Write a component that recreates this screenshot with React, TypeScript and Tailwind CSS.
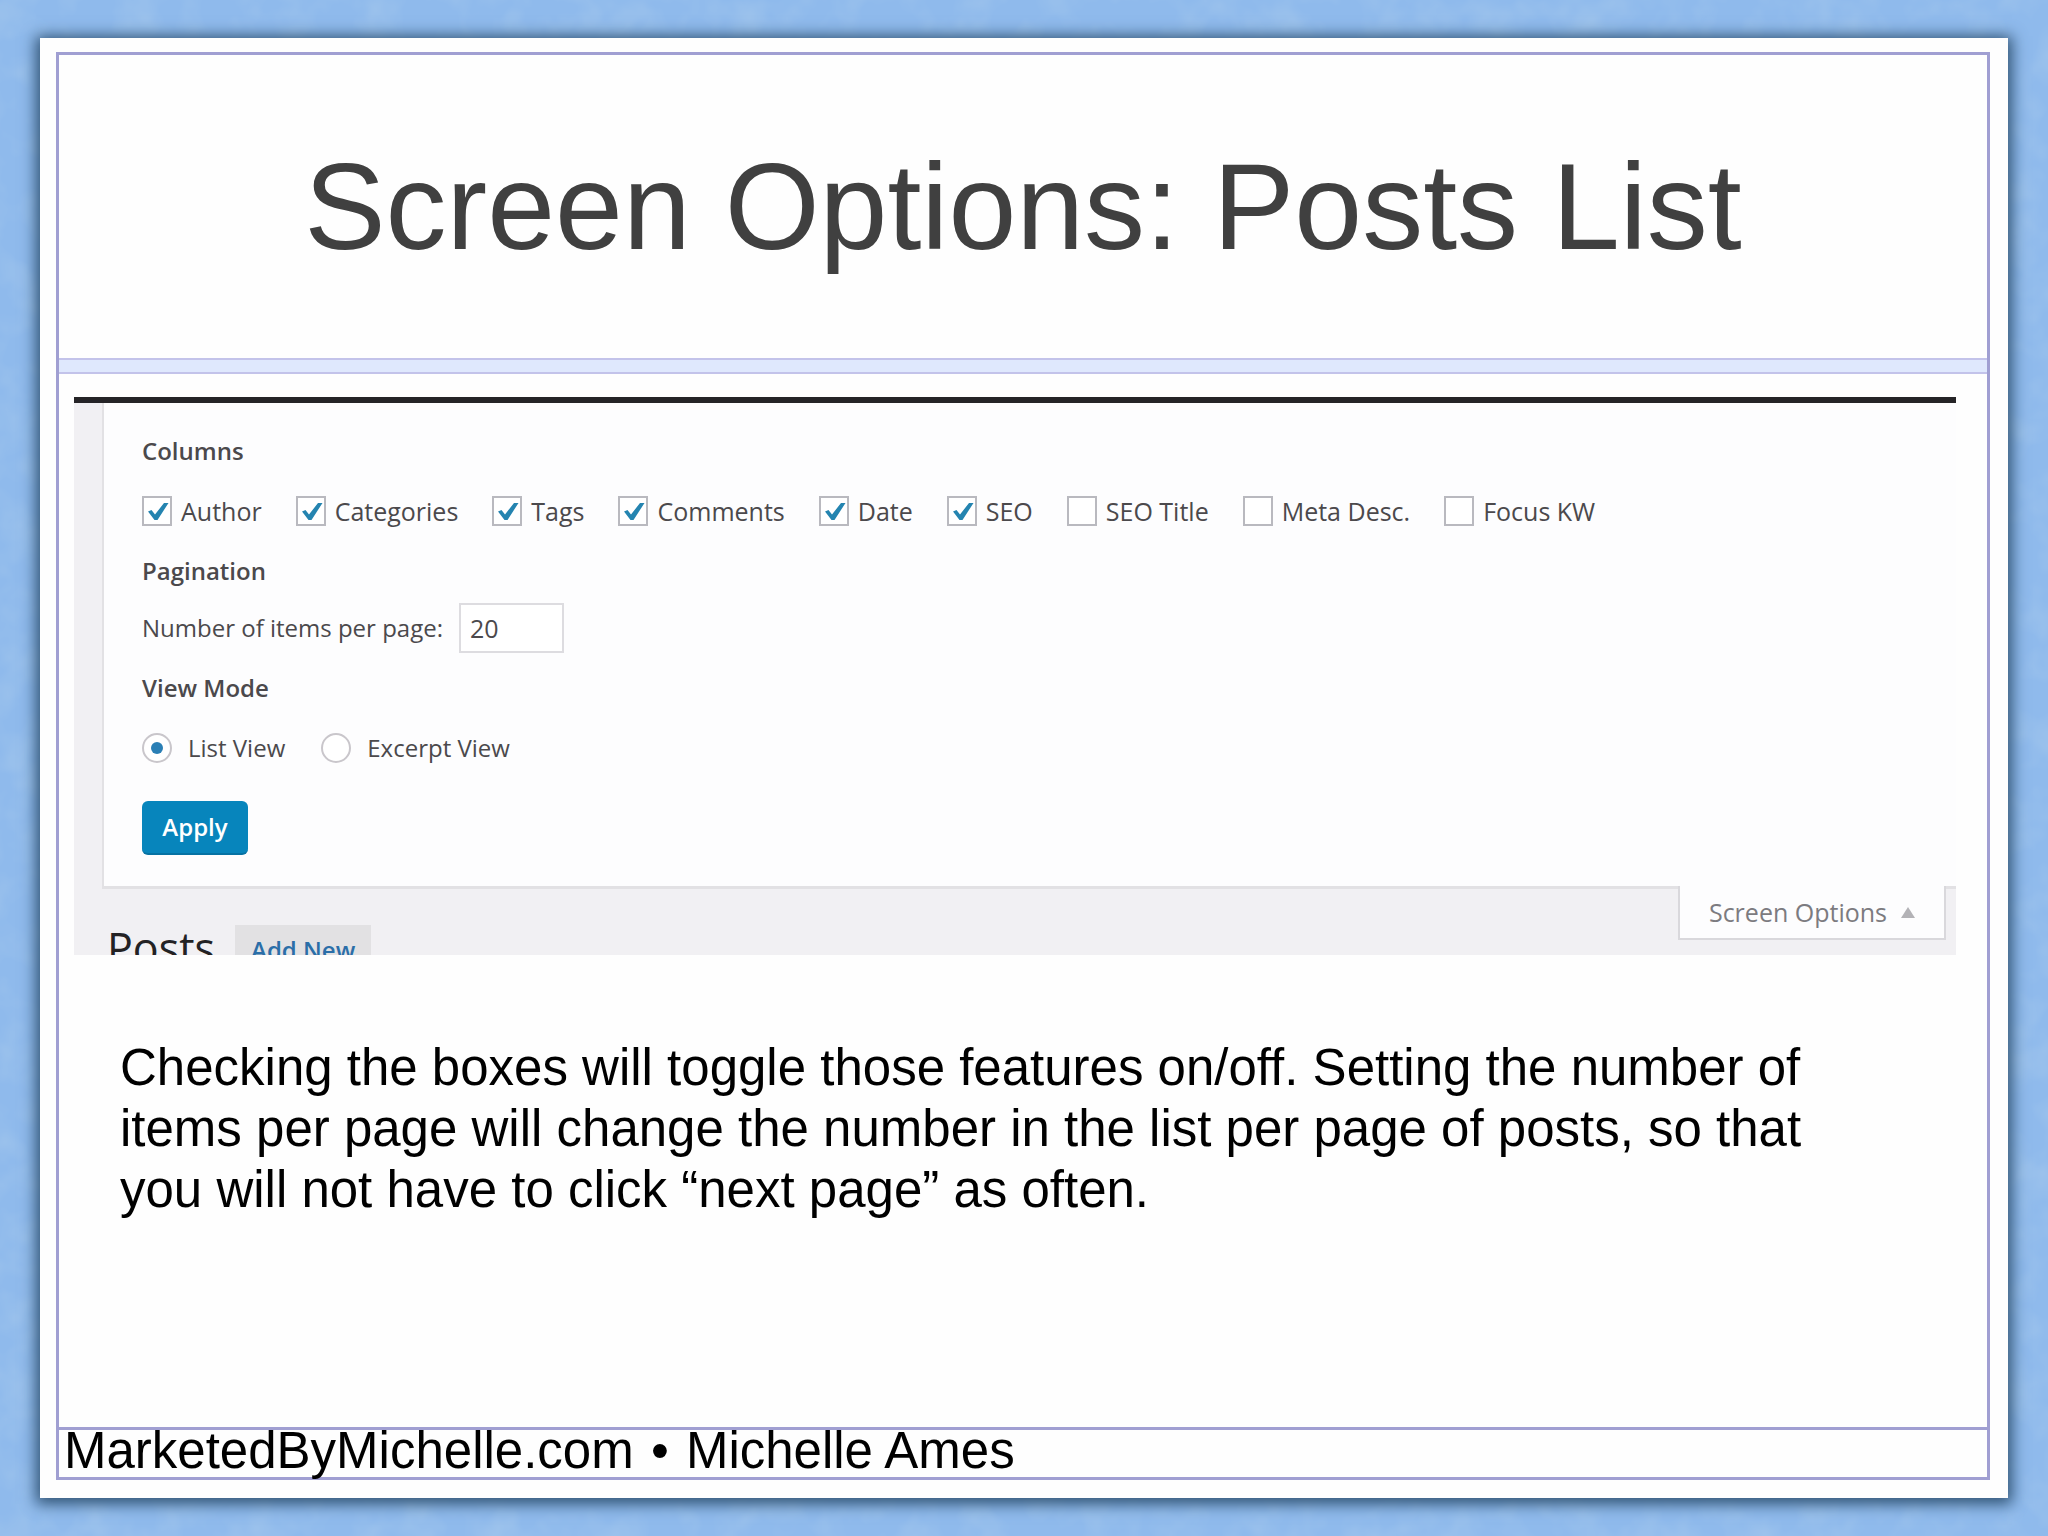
import React from "react";

const columns = [
  { id: "author", label: "Author", checked: true },
  { id: "categories", label: "Categories", checked: true },
  { id: "tags", label: "Tags", checked: true },
  { id: "comments", label: "Comments", checked: true },
  { id: "date", label: "Date", checked: true },
  { id: "seo", label: "SEO", checked: true },
  { id: "seo-title", label: "SEO Title", checked: false },
  { id: "meta-desc", label: "Meta Desc.", checked: false },
  { id: "focus-kw", label: "Focus KW", checked: false },
];

const viewModes = [
  { id: "list", label: "List View", checked: true },
  { id: "excerpt", label: "Excerpt View", checked: false },
];

function PaperTexture() {
  return (
    <svg className="absolute inset-0 w-full h-full" aria-hidden="true">
      <filter id="paper">
        <feTurbulence type="fractalNoise" baseFrequency="0.025" numOctaves="3" seed="4" />
        <feColorMatrix values="0 0 0 0 0.38  0 0 0 0 0.58  0 0 0 0 0.84  1.2 0 0 0 -0.5" />
      </filter>
      <rect width="100%" height="100%" filter="url(#paper)" />
    </svg>
  );
}

function ColumnToggle({ id, label, checked }: { id: string; label: string; checked: boolean }) {
  return (
    <label htmlFor={id} className="flex items-center gap-[9px]">
      <span className="relative block size-[30px]">
        <input
          id={id}
          type="checkbox"
          defaultChecked={checked}
          className="peer block size-[30px] appearance-none border-2 border-[#b9b9bf] bg-white"
        />
        <svg
          viewBox="0 0 30 30"
          className="absolute inset-0 hidden pointer-events-none peer-checked:block"
          aria-hidden="true"
        >
          <path d="M6 15.5 L9.5 14 L13 18.5 L22 7 L26.5 7 L15.5 24 L12.5 24 Z" fill="#2484b0" />
        </svg>
      </span>
      {label}
    </label>
  );
}

function ViewModeOption({ id, label, checked }: { id: string; label: string; checked: boolean }) {
  return (
    <label htmlFor={id} className="flex items-center gap-4">
      <span className="relative grid place-items-center size-[30px]">
        <input
          id={id}
          type="radio"
          name="view-mode"
          defaultChecked={checked}
          className="peer block size-[30px] appearance-none rounded-full border-2 border-[#c9c6cb] bg-white"
        />
        <span className="absolute hidden size-3 rounded-full bg-[#2a7fb5] pointer-events-none peer-checked:block" />
      </span>
      {label}
    </label>
  );
}

function OptionsPanel() {
  return (
    <section className="mt-[23px] ml-[15px] mr-[31px] border-t-6 border-[#252427] bg-[#f1f0f3] font-['Open_Sans',sans-serif] text-[24px] leading-8 text-[#4b494c]">
      <form className="ml-7 pl-[38px] pt-8 pb-[31px] bg-[#fdfdfe] border-l-2 border-b-3 border-[#e2e1e4]">
        <h2 className="font-semibold">Columns</h2>
        <div className="mt-7 flex flex-wrap gap-x-[34px] text-[25px]">
          {columns.map((column) => (
            <ColumnToggle key={column.id} {...column} />
          ))}
        </div>

        <h2 className="mt-7 font-semibold">Pagination</h2>
        <div className="mt-4 flex items-center gap-4">
          <label htmlFor="per-page">Number of items per page:</label>
          <input
            id="per-page"
            type="text"
            defaultValue="20"
            className="w-[105px] h-[50px] px-[9px] border-2 border-[#dddce0] bg-white text-[25px]"
          />
        </div>

        <h2 className="mt-[19px] font-semibold">View Mode</h2>
        <div className="mt-7 flex gap-x-9">
          {viewModes.map((mode) => (
            <ViewModeOption key={mode.id} {...mode} />
          ))}
        </div>

        <button
          type="button"
          className="mt-[37px] block h-[54px] w-[106px] rounded-md border-b-2 border-[#0672a3] bg-[#0785bc] font-semibold text-white"
        >
          Apply
        </button>
      </form>

      {/* Page heading, cut off by the bottom edge */}
      <div className="flex items-start justify-between">
        <div className="flex items-start gap-5 h-[66px] pl-[33px] pt-9 overflow-hidden">
          <h1 className="text-[43px] leading-[46px] text-[#232224]">Posts</h1>
          <a href="#" className="px-4 h-12 leading-[50px] bg-[#e2e1e3] font-semibold text-[#2b6ea8]">
            Add New
          </a>
        </div>
        <button
          type="button"
          className="-mt-[3px] mr-[10px] flex items-center gap-[14px] h-[54px] px-[29px] bg-[#fdfdfe] border-x-2 border-b-2 border-[#d9d8dc] text-[25px] text-[#7c7b80]"
        >
          Screen Options
          <svg viewBox="0 0 14 11" className="w-[14px] h-[11px]" aria-hidden="true">
            <path d="M7 0 L14 11 L0 11 Z" fill="#b3b2b6" />
          </svg>
        </button>
      </div>
    </section>
  );
}

export default function App() {
  return (
    <div className="relative flex min-h-screen px-10 py-[38px] bg-[#8fbaec] font-['Liberation_Sans',Arial,sans-serif]">
      <PaperTexture />
      <article className="relative flex flex-1 flex-col pt-[14px] pb-[18px] pl-4 pr-[18px] bg-[#fefefe] shadow-[0_2px_14px_4px_#2f5273]">
        <div className="flex flex-1 flex-col border-3 border-[#a09fd2]">
          <header className="flex items-center justify-center h-[303px]">
            <h1 className="text-[122px] leading-[136px] text-[#404040]">Screen Options: Posts List</h1>
          </header>
          <div className="h-4 border-y-2 border-[#c3c3ea] bg-[#dfe8fd]" />
          <main className="flex-1">
            <OptionsPanel />
            <p className="mt-[82px] ml-[61px] mr-[150px] text-[51px] leading-[61px] text-black">
              Checking the boxes will toggle those features on/off. Setting the number of items per
              page will change the number in the list per page of posts, so that you will not have
              to click “next page” as often.
            </p>
          </main>
          <footer className="h-[50px] pl-[5px] border-t-3 border-[#a09fd2] text-[51px] leading-[42px] text-black">
            MarketedByMichelle.com <span className="px-[3px]">•</span> Michelle Ames
          </footer>
        </div>
      </article>
    </div>
  );
}
